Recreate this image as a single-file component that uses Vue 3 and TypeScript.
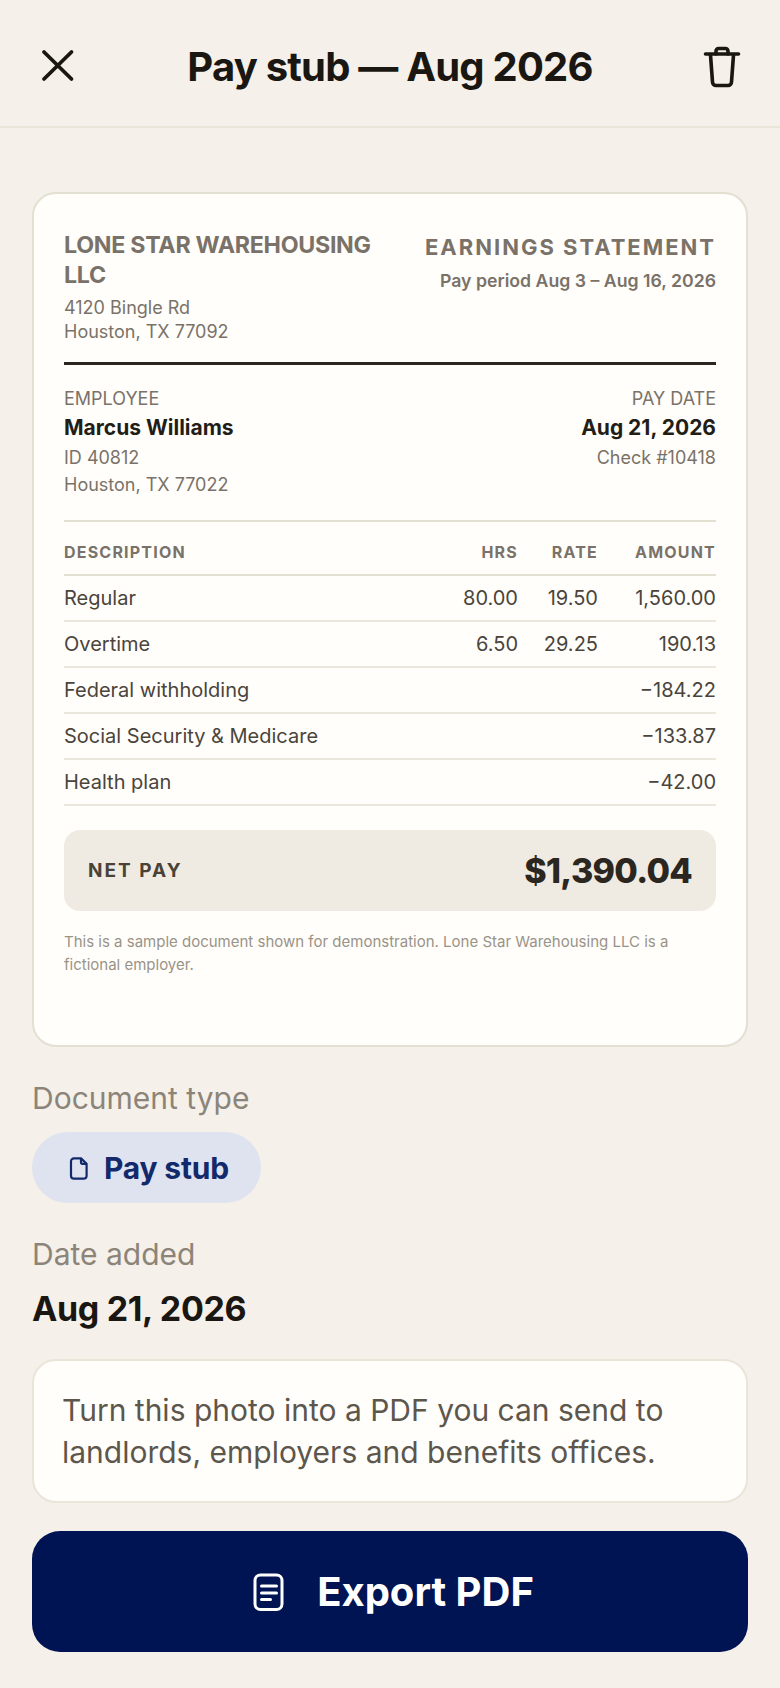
<script setup lang="ts">
interface Row {
  label: string
  hrs?: string
  rate?: string
  amount: string
}

const rows: Row[] = [
  { label: 'Regular', hrs: '80.00', rate: '19.50', amount: '1,560.00' },
  { label: 'Overtime', hrs: '6.50', rate: '29.25', amount: '190.13' },
  { label: 'Federal withholding', amount: '−184.22' },
  { label: 'Social Security & Medicare', amount: '−133.87' },
  { label: 'Health plan', amount: '−42.00' },
]
</script>

<template>
  <div class="screen">
    <header class="topbar">
      <button class="icon_btn">
        <svg width="36" height="36" viewBox="0 0 36 36" fill="none" stroke="#1a1611" stroke-width="3.8" stroke-linecap="round">
          <path d="M4 4 L31.500 31 M31.500 4 L4 31" />
        </svg>
      </button>
      <h1 class="title">Pay stub — Aug 2026</h1>
      <button class="icon_btn">
        <svg width="40" height="44" viewBox="0 0 40 44" fill="none" stroke="#1a1611" stroke-width="3.6" stroke-linecap="round" stroke-linejoin="round">
          <path d="M3.500 10H36.500" />
          <path d="M14 10V7a2.500 2.500 0 0 1 2.500-2.500h7A2.500 2.500 0 0 1 26 7v3" />
          <path d="M8.500 11l2 27a3.500 3.500 0 0 0 3.500 3.500h12a3.500 3.500 0 0 0 3.500-3.500l2-27" />
        </svg>
      </button>
    </header>

    <main class="content">
      <section class="doc">
        <div class="doc_head">
          <div class="employer">
            <div class="employer_name">LONE STAR WAREHOUSING LLC</div>
            <div class="small">4120 Bingle Rd</div>
            <div class="small">Houston, TX 77092</div>
          </div>
          <div class="statement">
            <div class="statement_title">EARNINGS STATEMENT</div>
            <div class="period">Pay period Aug 3 – Aug 16, 2026</div>
          </div>
        </div>

        <div class="parties">
          <div>
            <div class="small">EMPLOYEE</div>
            <div class="strong">Marcus Williams</div>
            <div class="small">ID 40812</div>
            <div class="small tall">Houston, TX 77022</div>
          </div>
          <div class="right">
            <div class="small">PAY DATE</div>
            <div class="strong">Aug 21, 2026</div>
            <div class="small">Check #10418</div>
          </div>
        </div>

        <div class="table">
          <div class="row row_head">
            <span>DESCRIPTION</span>
            <span class="num">HRS</span>
            <span class="num">RATE</span>
            <span class="num">AMOUNT</span>
          </div>
          <div v-for="row in rows" :key="row.label" class="row">
            <span>{{ row.label }}</span>
            <span class="num">{{ row.hrs }}</span>
            <span class="num">{{ row.rate }}</span>
            <span class="num">{{ row.amount }}</span>
          </div>
        </div>

        <div class="net">
          <span class="net_label">NET PAY</span>
          <span class="net_value">$1,390.04</span>
        </div>

        <p class="note">This is a sample document shown for demonstration. Lone Star Warehousing LLC is a fictional employer.</p>
      </section>

      <div class="field_label">Document type</div>
      <div class="chip">
        <svg width="22" height="24" viewBox="0 0 22 24" fill="none" stroke="#12296b" stroke-width="2.200" stroke-linejoin="round">
          <path d="M6 2.300h7l5.600 5.600v11.800a3 3 0 0 1-3 3H6a3 3 0 0 1-3-3V5.300a3 3 0 0 1 3-3z" />
          <path d="M13 2.300v4a1.500 1.500 0 0 0 1.500 1.500h4" />
        </svg>
        <span>Pay stub</span>
      </div>

      <div class="field_label date_label">Date added</div>
      <div class="date">Aug 21, 2026</div>

      <div class="hint">Turn this photo into a PDF you can send to landlords, employers and benefits offices.</div>

      <button class="export">
        <svg width="32" height="40" viewBox="0 0 32 40" fill="none" stroke="#fff" stroke-width="3" stroke-linecap="round">
          <rect x="2" y="3" width="27" height="34.500" rx="5.500" />
          <path d="M8.500 14h15M8.500 21h15M8.500 27.500h9" />
        </svg>
        <span>Export PDF</span>
      </button>
    </main>
  </div>
</template>

<style>
html,
body {
  margin: 0;
  background: #f5f0e9;
}
</style>

<style scoped>
.screen {
  width: 780px;
  height: 1688px;
  overflow: hidden;
  background: #f5f0e9;
  font-family: Inter, "Liberation Sans", sans-serif;
  color: #1a1611;
}

.topbar {
  display: flex;
  align-items: center;
  justify-content: space-between;
  box-sizing: border-box;
  height: 128px;
  padding: 6px 32px 0;
  border-bottom: 2px solid #e9e5d9;
}

.icon_btn {
  display: flex;
  align-items: center;
  justify-content: center;
  width: 52px;
  height: 52px;
  padding: 0;
  border: none;
  background: none;
}

.title {
  margin: 0;
  font-size: 40px;
  font-weight: 700;
  letter-spacing: -0.8px;
}

.content {
  display: flex;
  flex-direction: column;
  align-items: flex-start;
  padding: 64px 32px 0;
}

.doc {
  box-sizing: border-box;
  width: 716px;
  height: 855px;
  padding: 36px 30px 0;
  border: 2px solid #e2e0d0;
  border-radius: 24px;
  background: #fffefb;
}

.doc_head {
  display: flex;
  justify-content: space-between;
  gap: 24px;
  padding-bottom: 18px;
  border-bottom: 3px solid #2b2620;
}

.employer {
  width: 310px;
}

.employer_name {
  font-size: 23.250px;
  font-weight: 700;
  line-height: 30px;
  letter-spacing: -0.3px;
  color: #7a7268;
  margin-bottom: 6px;
}

.small {
  font-size: 18px;
  line-height: 24px;
  color: #7a7268;
}

.tall {
  margin-top: 3px;
}

.statement {
  padding-top: 1px;
  text-align: right;
}

.statement_title {
  font-size: 22px;
  font-weight: 700;
  line-height: 32px;
  letter-spacing: 2px;
  color: #7a7268;
}

.period {
  margin-top: 6px;
  font-size: 17.700px;
  font-weight: 600;
  line-height: 24px;
  color: #7a7268;
}

.parties {
  display: flex;
  justify-content: space-between;
  padding: 22px 0 23px;
  border-bottom: 2px solid #e2e0d0;
}

.strong {
  margin: 3px 0 4px;
  font-size: 21px;
  font-weight: 700;
  line-height: 28px;
  color: #221d17;
}

.right {
  text-align: right;
}

.row {
  display: grid;
  grid-template-columns: 1fr 90px 80px 118px;
  align-items: center;
  height: 46px;
  box-sizing: border-box;
  border-bottom: 2px solid #eae8dc;
  font-size: 20px;
  color: #4a443b;
}

.row_head {
  height: 54px;
  padding-top: 8px;
  border-bottom-color: #e2e0d0;
  font-size: 16px;
  font-weight: 700;
  letter-spacing: 1.2px;
  color: #7a7268;
}

.num {
  text-align: right;
}

.net {
  display: flex;
  align-items: center;
  justify-content: space-between;
  box-sizing: border-box;
  height: 81px;
  margin-top: 24px;
  padding: 0 24px;
  border-radius: 16px;
  background: #efebe3;
}

.net_label {
  font-size: 19px;
  font-weight: 700;
  letter-spacing: 2px;
  color: #4a4237;
}

.net_value {
  font-size: 34px;
  font-weight: 800;
  letter-spacing: -0.68px;
  color: #2b2620;
}

.note {
  margin: 19px 0 0;
  font-size: 15px;
  line-height: 23px;
  color: #9a9388;
}

.field_label {
  margin-top: 33px;
  font-size: 30px;
  line-height: 36px;
  color: #8c8478;
}

.chip {
  display: flex;
  align-items: center;
  gap: 14px;
  height: 71px;
  margin-top: 16px;
  padding: 0 32px 0 36px;
  border-radius: 36px;
  background: #dfe3ef;
  font-size: 30px;
  font-weight: 700;
  letter-spacing: -0.2px;
  color: #12296b;
}

.date_label {
  margin-top: 33px;
}

.date {
  margin-top: 15px;
  font-size: 34px;
  font-weight: 700;
  letter-spacing: -0.34px;
  line-height: 44px;
}

.hint {
  box-sizing: border-box;
  width: 716px;
  margin-top: 28px;
  padding: 28px;
  border: 2px solid #e9e5d9;
  border-radius: 24px;
  background: #fffefb;
  font-size: 30px;
  line-height: 42px;
  color: #5d564c;
}

.export {
  display: flex;
  align-items: center;
  justify-content: center;
  gap: 32px;
  width: 716px;
  height: 121px;
  margin-top: 28px;
  padding: 0 0 0 7px;
  border: none;
  border-radius: 28px;
  background: #001352;
  font-family: inherit;
  font-size: 40px;
  font-weight: 700;
  color: #fff;
}
</style>
